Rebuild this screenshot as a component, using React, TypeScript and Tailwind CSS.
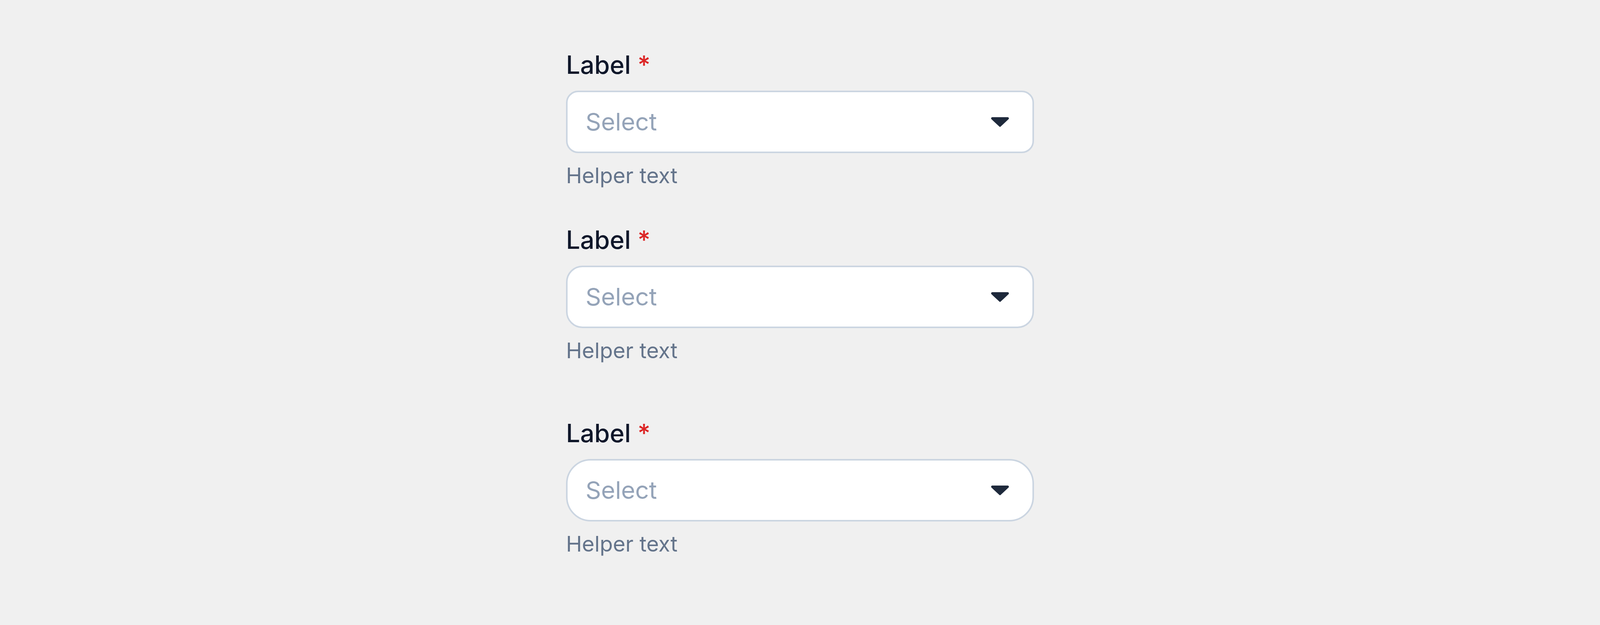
const fields = [
  { radius: "rounded-[31px]", spacing: "" },
  { radius: "rounded-[42px]", spacing: "mt-[93px]" },
  { radius: "rounded-[63px]", spacing: "mt-[140px]" },
];

function Caret() {
  return (
    <svg width="46" height="25" viewBox="0 0 46 25" className="shrink-0">
      <path
        d="M3.2 0H42.8a3 3 0 0 1 2.2 5L25.2 23.6a3 3 0 0 1-4.4 0L1 5A3 3 0 0 1 3.2 0Z"
        fill="#1e293b"
      />
    </svg>
  );
}

function SelectField({ radius }: { radius: string }) {
  return (
    <div className="flex flex-col">
      <label className="text-[64px] leading-[76px] font-medium text-[#0f172a]">
        Label <span className="text-[#dc2626]">*</span>
      </label>
      <button
        type="button"
        className={`mt-[28px] flex h-[160px] w-full items-center justify-between border-[4px] border-[#cbd5e1] bg-white pl-[46px] pr-[60px] text-left ${radius}`}
      >
        <span className="text-[62px] leading-[76px] text-[#94a3b8]">Select</span>
        <Caret />
      </button>
      <p className="mt-[23px] text-[55px] leading-[68px] text-[#64748b]">
        Helper text
      </p>
    </div>
  );
}

export default function App() {
  return (
    <div className="h-[1600px] w-full overflow-hidden bg-[#f0f0f0] pt-[128px] font-['Inter',sans-serif]">
      <div className="mx-auto w-[1198px]">
        {fields.map((f, i) => (
          <div key={i} className={f.spacing}>
            <SelectField radius={f.radius} />
          </div>
        ))}
      </div>
    </div>
  );
}
